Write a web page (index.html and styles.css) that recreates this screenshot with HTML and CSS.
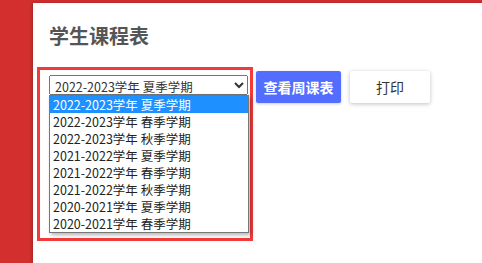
FILE: index.html
```html
<!DOCTYPE html>
<html lang="zh-CN">
<head>
    <meta charset="UTF-8">
    <meta name="viewport" content="width=device-width, initial-scale=1.0">
    <title>学生课程表</title>
    <link rel="stylesheet" href="styles.css">
</head>
<body>
    <div class="page">
        <div class="card">
            <h1 class="title">学生课程表</h1>
            <div class="controls">
                <div class="picker">
                    <select class="term-select">
                        <option>2022-2023学年 夏季学期</option>
                    </select>
                    <div class="options">
                        <div class="option selected">2022-2023学年 夏季学期</div>
                        <div class="option">2022-2023学年 春季学期</div>
                        <div class="option">2022-2023学年 秋季学期</div>
                        <div class="option">2021-2022学年 夏季学期</div>
                        <div class="option">2021-2022学年 春季学期</div>
                        <div class="option">2021-2022学年 秋季学期</div>
                        <div class="option">2020-2021学年 夏季学期</div>
                        <div class="option">2020-2021学年 春季学期</div>
                    </div>
                </div>
                <button class="btn primary">查看周课表</button>
                <button class="btn plain">打印</button>
            </div>
        </div>
    </div>
</body>
</html>
```
FILE: styles.css
```css
body {
    margin: 0;
    background-color: #d32f2f;
    font-family: "Noto Sans CJK SC", "Noto Sans", sans-serif;
}

.page {
    padding: 3px 0 0 33px;
    height: 260px;
}

.card {
    background: #fff;
    height: 100%;
    padding: 0 16px;
    box-shadow: -1px 0 3px rgba(0, 0, 0, 0.25);
}

.title {
    margin: 0;
    padding-top: 20px;
    height: 44px;
    font-size: 20px;
    line-height: 26px;
    font-weight: bold;
    color: #555;
}

.controls {
    display: flex;
    align-items: flex-start;
    margin-left: -12px;
}

.picker {
    border: 3px solid #f33a3a;
    padding: 5px 1px 5px 9px;
}

.term-select {
    display: block;
    width: 199px;
    height: 20px;
    font-family: inherit;
    font-size: 12.5px;
    color: #333;
    padding: 0 0 0 1px;
    margin: 0;
}

.options {
    width: 198px;
    border: 1px solid #777;
    background: #fff;
    box-shadow: 2px 2px 4px rgba(0, 0, 0, 0.3);
}

.option {
    height: 17px;
    line-height: 17px;
    font-size: 12.5px;
    padding-left: 3px;
    color: #222;
}

.option.selected {
    background: #1e90ff;
    color: #fff;
}

.btn {
    margin-top: 4px;
    height: 32px;
    border: none;
    border-radius: 2px;
    font-family: inherit;
    font-size: 14px;
    cursor: pointer;
}

.btn.primary {
    margin-left: 3px;
    width: 85px;
    background: #536dfe;
    color: #fff;
    font-weight: bold;
    box-shadow: 0 1px 3px rgba(0, 0, 0, 0.2);
}

.btn.plain {
    margin-left: 9px;
    width: 80px;
    background: #fff;
    color: #333;
    box-shadow: 0 1px 4px rgba(0, 0, 0, 0.25);
}
```
